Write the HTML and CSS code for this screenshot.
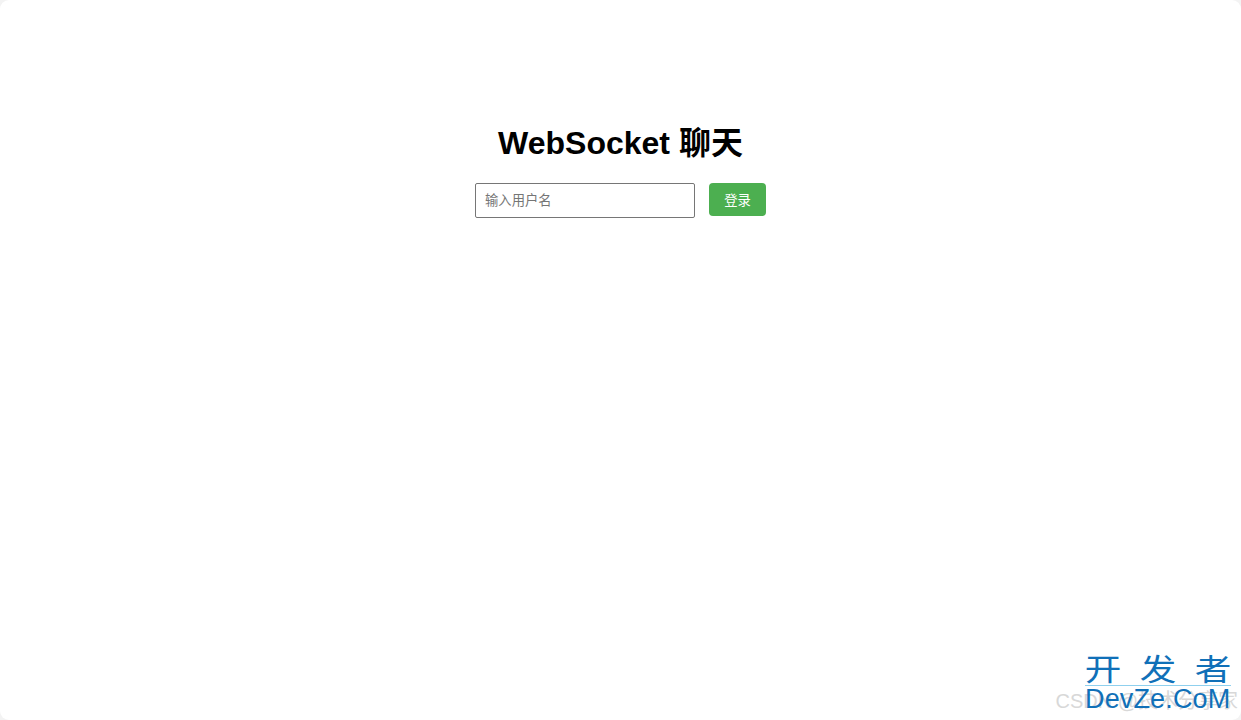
FILE: index.html
```html
<!DOCTYPE html>
<html lang="zh">
<head>
<meta charset="utf-8">
<title>WebSocket 聊天</title>
<link rel="stylesheet" href="styles.css">
</head>
<body>
<main class="page">
  <h1 class="title">WebSocket 聊天</h1>
  <form class="login">
    <input class="name" type="text" placeholder="输入用户名">
    <button class="submit" type="button">登录</button>
  </form>
</main>
<div class="mark-csdn">CSDN @技术分享家</div>
<div class="mark">
  <div class="mark-cn"><span>开</span><span>发</span><span>者</span></div>
  <div class="mark-en">DevZe.CoM</div>
</div>
</body>
</html>
```
FILE: styles.css
```css
html { height: 100%; background: #f3f3f3; }
body {
  margin: 0;
  height: 100%;
  background: #fff;
  border-radius: 9px;
  font-family: "Liberation Sans", "Noto Sans CJK SC", sans-serif;
  overflow: hidden;
  position: relative;
}
.page {
  display: flex;
  flex-direction: column;
  align-items: center;
  padding-top: 125px;
}
.title {
  margin: 0 0 21px;
  font-size: 32px;
  line-height: 37px;
  font-weight: 700;
  color: #000;
}
.login { display: flex; align-items: flex-start; gap: 14px; }
.name {
  box-sizing: border-box;
  width: 220px;
  height: 35px;
  padding: 0 9px 1px;
  border: 1px solid #767676;
  border-radius: 2px;
  font: 13.33px "Liberation Sans", "Noto Sans CJK SC", sans-serif;
  outline: none;
}
.name::placeholder { color: #757575; }
.submit {
  box-sizing: border-box;
  width: 57px;
  height: 33px;
  padding: 0 0 1px;
  border: 0;
  border-radius: 4px;
  background: #4caf50;
  color: #fff;
  font: 13.33px "Liberation Sans", "Noto Sans CJK SC", sans-serif;
}
.mark-csdn {
  position: absolute;
  right: 3px;
  bottom: 7px;
  font-size: 20px;
  line-height: 24px;
  color: #d8d8d8;
  white-space: nowrap;
}
.mark {
  position: absolute;
  left: 1085px;
  top: 654px;
  width: 146px;
  color: #1070b8;
}
.mark-cn {
  display: flex;
  justify-content: space-between;
  font: 30px/31px "Noto Sans CJK SC", sans-serif;
  border-bottom: 1px solid #8fd0ee;
}
.mark-cn span {
  margin: 0 3px;
  transform: translateY(-2px) scaleX(1.22);
}
.mark-en {
  font-size: 27px;
  line-height: 26px;
  letter-spacing: 0.15px;
  white-space: nowrap;
}
```
